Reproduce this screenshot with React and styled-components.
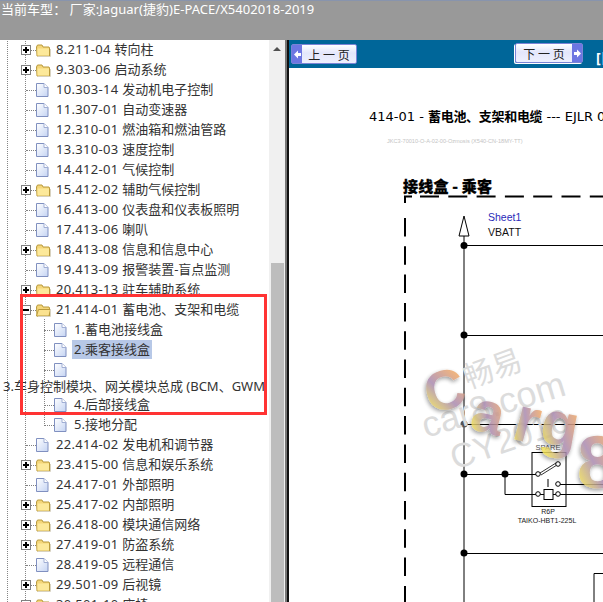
import React from "react";
import styled, { createGlobalStyle } from "styled-components";

const UI_FONT = `"Noto Sans", "Noto Sans CJK SC", sans-serif`;

const GlobalStyle = createGlobalStyle`
  html, body {
    margin: 0;
    padding: 0;
    background: #ffffff;
  }
`;

const Page = styled.div`
  width: 603px;
  height: 602px;
  display: flex;
  flex-direction: column;
  overflow: hidden;
  font-family: ${UI_FONT};
`;

const Header = styled.header`
  height: 39px;
  flex: none;
  background: #999999;
  border-top: 1px solid #8894ad;
  color: #ffffff;
  font-size: 13px;
  line-height: 17px;
  padding-left: 1px;
  white-space: pre;
  letter-spacing: 0.04px;
`;

const Body = styled.div`
  flex: 1;
  min-height: 0;
  display: flex;
`;

const TreePane = styled.aside`
  position: relative;
  width: 269px;
  flex: none;
  overflow: hidden;
  background: #ffffff;
`;

const dots = "repeating-linear-gradient(to bottom, #858585 0 1px, transparent 1px 2px)";

const Tree = styled.div`
  margin-top: -1px;
  color: #333333;
  font-size: 13px;
  background-image: ${dots}, ${dots};
  background-size: 1px 100%;
  background-repeat: no-repeat;
  background-position: 7px 0, 25px 0;
`;

const Row = styled.div`
  height: 20px;
  display: flex;
  align-items: center;
  padding-left: ${(props) => (props.$hasToggle ? "21px" : "26px")};
`;

const Toggle = styled.span`
  position: relative;
  box-sizing: border-box;
  width: 10px;
  height: 10px;
  flex: none;
  margin-top: 2px;
  background: #ffffff;
  border: 1px solid #808080;

  &::before {
    content: "";
    position: absolute;
    left: 1px;
    right: 1px;
    top: 3px;
    height: 2px;
    background: #000000;
  }

  &::after {
    content: "";
    display: ${(props) => (props.$open ? "none" : "block")};
    position: absolute;
    top: 1px;
    bottom: 1px;
    left: 3px;
    width: 2px;
    background: #000000;
  }
`;

const Connector = styled.span`
  width: ${(props) => props.$width}px;
  flex: none;
  margin-top: 2px;
  border-top: 1px dotted #808080;
`;

const IconSlot = styled.span`
  width: ${(props) => props.$width}px;
  flex: none;
  display: flex;
  margin-top: 2px;
`;

const Label = styled.span`
  line-height: 20px;
  white-space: pre;
`;

const Code = styled.span`
  letter-spacing: 0.3px;
`;

const SubTree = styled.div`
  background-image: ${dots};
  background-size: 1px calc(100% - 10px);
  background-repeat: no-repeat;
  background-position: 44px 0;
`;

const SubRow = styled.div`
  height: 20px;
  display: flex;
  align-items: center;
  padding-left: 44px;
`;

const SubLabel = styled.span`
  margin-left: 4px;
  padding: 0 2px;
  line-height: 19px;
  white-space: nowrap;
  background: ${(props) => (props.$selected ? "#b7c8e7" : "transparent")};
`;

const OverflowLabel = styled.div`
  width: 261px;
  height: 15px;
  padding-left: 3px;
  line-height: 15px;
  white-space: nowrap;
  overflow: hidden;
`;

const Annotation = styled.div`
  position: absolute;
  left: 20px;
  top: 254px;
  width: 247px;
  height: 121px;
  box-sizing: border-box;
  border: 3px solid #ff3333;
`;

const ScrollBar = styled.div`
  width: 16px;
  flex: none;
  display: flex;
  flex-direction: column;
  align-items: center;
  background: #f0f0f0;
`;

const ArrowUp = styled.span`
  margin-top: 7px;
  width: 0;
  height: 0;
  border-left: 4px solid transparent;
  border-right: 4px solid transparent;
  border-bottom: 4px solid #505050;
`;

const Thumb = styled.div`
  width: 13px;
  flex: 1;
  margin-top: 212px;
  background: #bdbdbd;
`;

const Splitter = styled.div`
  width: 4px;
  flex: none;
  box-sizing: border-box;
  background: #777777;
  border-right: 2px solid #111111;
`;

const Content = styled.main`
  position: relative;
  flex: 1;
  min-width: 0;
  overflow: hidden;
  background: #ffffff;
`;

const NavBar = styled.nav`
  height: 28px;
  display: flex;
  align-items: center;
  padding-left: 2px;
  background: #006699;
  overflow: hidden;
`;

const PageButton = styled.button`
  width: ${(props) => props.$width}px;
  height: 20px;
  flex: none;
  display: flex;
  flex-direction: ${(props) => (props.$next ? "row-reverse" : "row")};
  align-items: center;
  padding: 0;
  margin: ${(props) => (props.$next ? "-2px 0 0 158px" : "0")};
  border: 1px solid #7a84d6;
  border-radius: 2px;
  box-shadow: ${(props) => (props.$next ? "-1px 1px 0 #ffffff" : "none")};
  background: linear-gradient(to bottom, #ffffff, #e3e6fb 45%, #eef0fd);
  color: #222222;
  font-family: "Noto Sans CJK SC", sans-serif;
  font-size: 12px;
`;

const ButtonArrow = styled.span`
  width: 10px;
  align-self: stretch;
  flex: none;
  display: flex;
  align-items: center;
  justify-content: center;
  background: #6d76e2;
`;

const ButtonText = styled.span`
  flex: 1;
  text-align: center;
  white-space: pre;
`;

const NavExtra = styled.span`
  margin: 6px 0 0 13px;
  color: #ffffff;
  font-size: 14px;
  font-weight: 700;
  white-space: nowrap;
`;

const DocTitle = styled.h1`
  margin: 40px 0 0 80px;
  color: #000000;
  font-family: "DejaVu Sans", "Noto Sans CJK SC", sans-serif;
  font-size: 13px;
  font-weight: 400;
  line-height: 17px;
  white-space: nowrap;
  b {
    font-weight: 700;
    letter-spacing: -0.3px;
  }
`;

const DocCode = styled.div`
  margin: 12px 0 0 98px;
  color: #c4c4c4;
  font-family: "Liberation Sans", sans-serif;
  font-size: 5.6px;
  line-height: 8px;
  white-space: nowrap;
`;

const DiagramTitle = styled.h2`
  margin: 32px 0 0 114px;
  color: #000000;
  font-family: "Noto Sans CJK SC", sans-serif;
  font-size: 15px;
  font-weight: 900;
  line-height: 18px;
  letter-spacing: 0.2px;
  white-space: pre;
  -webkit-text-stroke: 0.3px #000000;
`;

const Diagram = styled.svg`
  display: block;
  width: 314px;
  height: 407px;
`;

const Watermark = styled.svg`
  position: absolute;
  left: 0;
  top: 0;
  width: 314px;
  height: 562px;
  pointer-events: none;
`;

const FolderIcon = ({ open }) => (
  <svg width="15" height="13" viewBox="0 0 15 13">
    <path d="M0.5 3 L1.5 1 H6 L7 3 H13 L13.5 4 V12 H1 Z" fill="#f4d67a" stroke="#b99a3c" strokeWidth="1" />
    {open ? (
      <path d="M0.5 12 L2.5 5.5 H14.5 L13 12 Z" fill="#fbe28f" stroke="#b99a3c" strokeWidth="1" />
    ) : (
      <rect x="1.5" y="4.5" width="11.5" height="7" fill="#fde99a" />
    )}
    <path d="M14.5 5 V12.5 H2" fill="none" stroke="#d8d2c0" strokeWidth="1" />
  </svg>
);

const DocIcon = () => (
  <svg width="13" height="15" viewBox="0 0 13 15">
    <defs>
      <linearGradient id="docFill" x1="0" y1="0" x2="1" y2="1">
        <stop offset="0" stopColor="#ffffff" />
        <stop offset="1" stopColor="#c5d4f3" />
      </linearGradient>
    </defs>
    <path d="M0.5 0.5 H8 L12 4.5 V13.5 H0.5 Z" fill="url(#docFill)" stroke="#8090c0" strokeWidth="1" />
    <path d="M8 0.5 V4.5 H12" fill="#ffffff" stroke="#a0aed4" strokeWidth="1" />
  </svg>
);

const ArrowGlyph = ({ next }) => (
  <svg width="7" height="9" viewBox="0 0 7 9">
    <path
      d={next ? "M0 3 H3 V0.5 L7 4.5 L3 8.5 V6 H0 Z" : "M7 3 H4 V0.5 L0 4.5 L4 8.5 V6 H7 Z"}
      fill="#ffffff"
    />
  </svg>
);

const before = [
  { text: "8.211-04 转向柱", folder: true },
  { text: "9.303-06 启动系统", folder: true },
  { text: "10.303-14 发动机电子控制" },
  { text: "11.307-01 自动变速器" },
  { text: "12.310-01 燃油箱和燃油管路" },
  { text: "13.310-03 速度控制" },
  { text: "14.412-01 气候控制" },
  { text: "15.412-02 辅助气候控制", folder: true },
  { text: "16.413-00 仪表盘和仪表板照明" },
  { text: "17.413-06 喇叭" },
  { text: "18.413-08 信息和信息中心", folder: true },
  { text: "19.413-09 报警装置-盲点监测" },
  { text: "20.413-13 驻车辅助系统", folder: true },
];

const after = [
  { text: "22.414-02 发电机和调节器" },
  { text: "23.415-00 信息和娱乐系统", folder: true },
  { text: "24.417-01 外部照明" },
  { text: "25.417-02 内部照明", folder: true },
  { text: "26.418-00 模块通信网络", folder: true },
  { text: "27.419-01 防盗系统", folder: true },
  { text: "28.419-05 远程通信" },
  { text: "29.501-09 后视镜", folder: true },
  { text: "30.501-10 座椅", folder: true },
];

const TreeRow = ({ text, folder, open }) => {
  const [code, name] = text.split(" ");
  return (
    <Row $hasToggle={folder}>
      {folder && <Toggle $open={open} />}
      <Connector $width={folder ? 5 : 10} />
      <IconSlot $width={20}>{folder ? <FolderIcon open={open} /> : <DocIcon />}</IconSlot>
      <Label>
        <Code>{code} </Code>
        {name}
      </Label>
    </Row>
  );
};

const Leaf = ({ text, selected }) => (
  <SubRow>
    <Connector $width={10} />
    <IconSlot $width={14}>
      <DocIcon />
    </IconSlot>
    {text && <SubLabel $selected={selected}>{text}</SubLabel>}
  </SubRow>
);

const wmLetters = [
  ["C", 430, 414, -15, 56],
  ["a", 468, 428, 15, 58],
  ["r", 510, 438, 15, 64],
  ["g", 538, 442, 10, 62],
  ["8", 577, 488, 0, 74],
];

// page coordinates, the svg viewBoxes start at the content pane
const App = () => (
  <>
    <GlobalStyle />
    <Page>
      <Header>{"当前车型： 厂家:Jaguar(捷豹)E-PACE/X5402018-2019"}</Header>
      <Body>
        <TreePane>
          <Tree>
            {before.map((item) => (
              <TreeRow key={item.text} {...item} />
            ))}
            <TreeRow text="21.414-01 蓄电池、支架和电缆" folder open />
            <SubTree>
              <Leaf text="1.蓄电池接线盒" />
              <Leaf text="2.乘客接线盒" selected />
              <Leaf />
              <OverflowLabel>3.车身控制模块、网关模块总成 (BCM、GWM)</OverflowLabel>
              <Leaf text="4.后部接线盒" />
              <Leaf text="5.接地分配" />
            </SubTree>
            {after.map((item) => (
              <TreeRow key={item.text} {...item} />
            ))}
          </Tree>
          <Annotation />
        </TreePane>
        <ScrollBar>
          <ArrowUp />
          <Thumb />
        </ScrollBar>
        <Splitter />
        <Content>
          <NavBar>
            <PageButton $width={66}>
              <ButtonArrow>
                <ArrowGlyph />
              </ButtonArrow>
              <ButtonText>{"上 一 页"}</ButtonText>
            </PageButton>
            <PageButton $width={68} $next>
              <ButtonArrow>
                <ArrowGlyph next />
              </ButtonArrow>
              <ButtonText>{"下 一 页"}</ButtonText>
            </PageButton>
            <NavExtra>[目录]</NavExtra>
          </NavBar>
          <DocTitle>
            414-01 - <b>蓄电池、支架和电缆</b> --- EJLR 00000000
          </DocTitle>
          <DocCode>JKC3-70010-O-A-02-00-Ozmosis (X540-CN-18MY-TT)</DocCode>
          <DiagramTitle>接线盒 - 乘客</DiagramTitle>
          <Diagram viewBox="289 195 314 407">
            <g fill="none" stroke="#000000">
              <path d="M405 203 V196.5 H412" strokeWidth="2" />
              <path d="M420 196.5 H603" strokeWidth="2" strokeDasharray="19 9.3" />
              <path d="M405 218 V602" strokeWidth="2" strokeDasharray="18.5 9.8" />
              <path d="M464 216 L469 236 H459 Z" strokeWidth="1" />
              <path d="M464 236 V602" strokeWidth="1" />
              <path d="M464 245.5 H603 M464 335.5 H603 M464 424.5 H603 M464 553.5 H603" strokeWidth="1" />
              <path d="M464 474.5 H536 M505 474.5 V494.5 H536" strokeWidth="1" />
              <rect x="532" y="452.5" width="34" height="54" strokeWidth="1" />
              <path d="M540 473 L556 463 M541 475 L557 465" strokeWidth="0.8" />
              <path d="M548 479 V487" strokeWidth="1" />
              <rect x="544" y="489.5" width="9" height="10" strokeWidth="1" />
              <path d="M540 494.5 H544 M553 494.5 H556 M560 494.5 H603 M560 484.5 H603" strokeWidth="1" />
              <circle cx="538" cy="474" r="2.3" fill="#ffffff" strokeWidth="1" />
              <circle cx="558" cy="464" r="2.3" fill="#ffffff" strokeWidth="1" />
              <circle cx="558" cy="484" r="2.3" fill="#ffffff" strokeWidth="1" />
              <circle cx="538" cy="494" r="2.3" fill="#ffffff" strokeWidth="1" />
              <circle cx="558" cy="494" r="2.3" fill="#ffffff" strokeWidth="1" />
              <path d="M594 602 V573.5 H603" strokeWidth="1" />
            </g>
            <g fill="#000000">
              <circle cx="464" cy="245.5" r="3.5" />
              <circle cx="464" cy="335" r="3.5" />
              <circle cx="464" cy="424" r="3.5" fill="#555555" />
              <circle cx="464" cy="474" r="3.5" />
              <circle cx="505" cy="474" r="3.5" />
              <circle cx="464" cy="553" r="3.5" />
            </g>
            <g fontFamily="Liberation Sans, sans-serif">
              <text x="488" y="221" fontSize="10.5" fill="#2a2ab8">Sheet1</text>
              <text x="488" y="236" fontSize="10.5" fill="#111111">VBATT</text>
              <text x="548" y="450" fontSize="7.5" fill="#555555" textAnchor="middle">SPARE</text>
              <text x="548" y="514" fontSize="7" fill="#222222" textAnchor="middle">R6P</text>
              <text x="547" y="523" fontSize="7" fill="#222222" textAnchor="middle">TAIKO-HBT1-225L</text>
            </g>
          </Diagram>
          <Watermark viewBox="289 40 314 562">
            <defs>
              <linearGradient id="wmFill" x1="1" y1="0" x2="0" y2="1">
                <stop offset="0.2" stopColor="#eea868" />
                <stop offset="0.55" stopColor="#a98ab0" />
                <stop offset="0.85" stopColor="#eedd55" />
              </linearGradient>
              <filter id="wmShadow" x="-30%" y="-30%" width="160%" height="160%">
                <feGaussianBlur in="SourceAlpha" stdDeviation="2" result="soft" />
                <feOffset in="soft" dx="-1" dy="2" result="moved" />
                <feComponentTransfer in="moved" result="shade">
                  <feFuncA type="linear" slope="0.45" />
                </feComponentTransfer>
                <feGaussianBlur in="SourceGraphic" stdDeviation="0.7" result="letter" />
                <feMerge>
                  <feMergeNode in="shade" />
                  <feMergeNode in="letter" />
                </feMerge>
              </filter>
            </defs>
            <g fill="#dcdcdc" fontFamily="Liberation Sans, Noto Sans CJK SC, sans-serif">
              <text x="468" y="389" fontSize="30" transform="rotate(-20 468 389)">畅易</text>
              <text x="426" y="438" fontSize="36" transform="rotate(-17 426 438)">car8.com</text>
              <text x="455" y="470" fontSize="34" transform="rotate(-19 455 470)">CY2016</text>
            </g>
            <g fill="url(#wmFill)" filter="url(#wmShadow)" fontFamily="Liberation Sans, sans-serif" fontWeight="700" opacity="0.85">
              {wmLetters.map(([ch, x, y, angle, size]) => (
                <text key={ch} x={x} y={y} fontSize={size} transform={`rotate(${angle} ${x} ${y})`}>
                  {ch}
                </text>
              ))}
            </g>
          </Watermark>
        </Content>
      </Body>
    </Page>
  </>
);

export default App;
